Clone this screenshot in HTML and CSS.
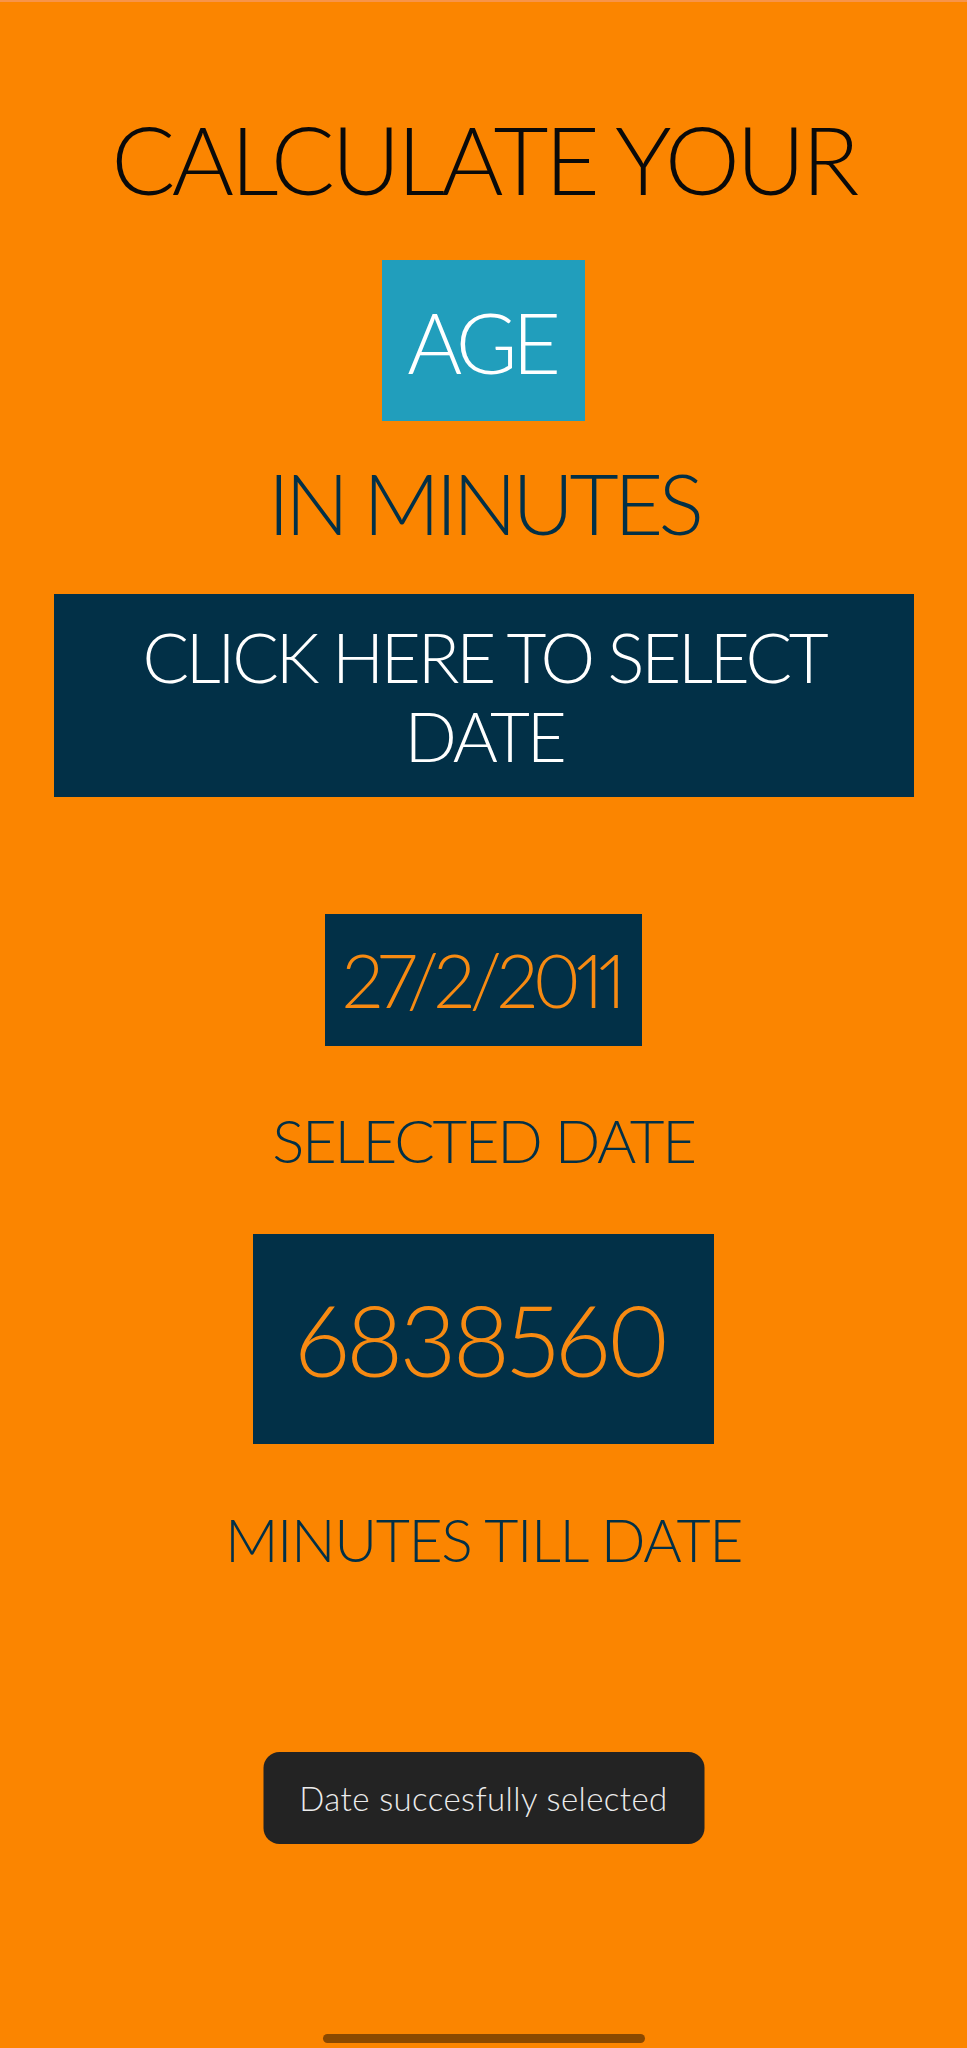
FILE: index.html
```html
<!DOCTYPE html>
<html lang="en">
<head>
<meta charset="utf-8">
<title>Age in Minutes</title>
<link rel="stylesheet" href="styles.css">
</head>
<body>
<main class="screen">
  <h1 class="title">CALCULATE YOUR</h1>
  <div class="age-box">AGE</div>
  <h2 class="subtitle">IN MINUTES</h2>
  <button class="select-btn" type="button">CLICK HERE TO SELECT DATE</button>
  <div class="value-box date-value">27/2/2011</div>
  <p class="label">SELECTED DATE</p>
  <div class="value-box minutes-value">6838560</div>
  <p class="label label-minutes">MINUTES TILL DATE</p>

  <div class="toast">Date succesfully selected</div>
  <div class="home-bar"></div>
</main>
</body>
</html>
```

FILE: styles.css
```css
* { box-sizing: border-box; }

html, body {
  margin: 0;
  padding: 0;
  background: #fb8500;
}

.screen {
  position: relative;
  min-height: 2048px;
  border-top: 2px solid #f7944a;
  display: flex;
  flex-direction: column;
  align-items: center;
  padding-top: 109px;
  font-family: "Lato", "Open Sans", sans-serif;
  font-weight: 300;
  color: #023047;
  text-align: center;
}

.title {
  margin: 0;
  font-size: 95px;
  line-height: 95px;
  font-weight: 300;
  letter-spacing: -3.6px;
  color: #0a0a0a;
}

.age-box {
  margin-top: 54px;
  height: 161px;
  padding: 3px 29px 0 25px;
  font-size: 84px;
  line-height: 158px;
  letter-spacing: -5.3px;
  background: #219ebc;
  color: #ffffff;
}

.subtitle {
  margin: 39px 0 0;
  font-size: 85px;
  line-height: 85px;
  font-weight: 300;
  letter-spacing: -4.7px;
  color: #023047;
}

.select-btn {
  margin-top: 49px;
  align-self: stretch;
  margin-left: 54px;
  margin-right: 53px;
  height: 203px;
  padding: 23px 80px 22px;
  border: 0;
  border-radius: 0;
  background: #023047;
  color: #ffffff;
  font-family: inherit;
  font-weight: 300;
  font-size: 69px;
  line-height: 79px;
  letter-spacing: -3.2px;
  text-align: center;
}

.value-box {
  background: #023047;
  color: #f78a12;
  font-variant-numeric: proportional-nums;
}

.date-value {
  margin-top: 117px;
  height: 132px;
  padding: 0 21px 0 17px;
  font-size: 74px;
  line-height: 132px;
  letter-spacing: -5.2px;
}

.label {
  margin: 64px 0 0;
  font-size: 60px;
  line-height: 60px;
  letter-spacing: -2.3px;
  color: #023047;
}

.minutes-value {
  margin-top: 64px;
  height: 210px;
  padding: 0 47px 0 42px;
  font-size: 98px;
  line-height: 210px;
  letter-spacing: -3.4px;
}

.label-minutes {
  margin-top: 66px;
  font-size: 59px;
  line-height: 59px;
  letter-spacing: -1.4px;
}

.toast {
  position: absolute;
  top: 1750px;
  left: 50%;
  transform: translateX(-50%);
  width: 441px;
  height: 92px;
  border-radius: 16px;
  background: #232323;
  color: #ececec;
  font-size: 33px;
  font-weight: 300;
  letter-spacing: 0.4px;
  line-height: 92px;
  white-space: nowrap;
}

.home-bar {
  position: absolute;
  top: 2032px;
  left: 50%;
  transform: translateX(-50%);
  width: 322px;
  height: 9px;
  border-radius: 5px;
  background: #8a4900;
}
```
